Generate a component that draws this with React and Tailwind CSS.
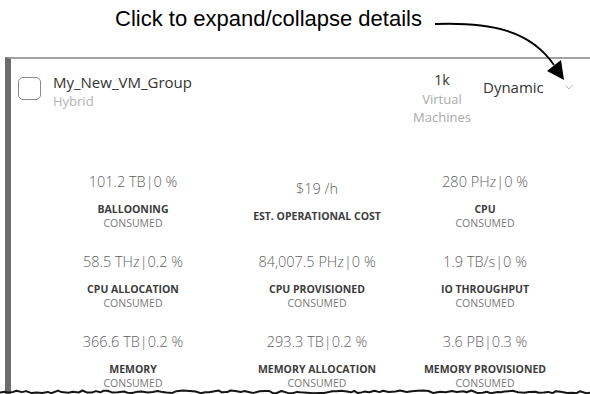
import React from 'react';

const metrics = [
  { value: '101.2 TB|0 %', label: 'BALLOONING', sub: 'CONSUMED' },
  { value: '$19 /h', label: 'EST. OPERATIONAL COST' },
  { value: '280 PHz|0 %', label: 'CPU', sub: 'CONSUMED' },
  { value: '58.5 THz|0.2 %', label: 'CPU ALLOCATION', sub: 'CONSUMED' },
  { value: '84,007.5 PHz|0 %', label: 'CPU PROVISIONED', sub: 'CONSUMED' },
  { value: '1.9 TB/s|0 %', label: 'IO THROUGHPUT', sub: 'CONSUMED' },
  { value: '366.6 TB|0.2 %', label: 'MEMORY', sub: 'CONSUMED' },
  { value: '293.3 TB|0.2 %', label: 'MEMORY ALLOCATION', sub: 'CONSUMED' },
  { value: '3.6 PB|0.3 %', label: 'MEMORY PROVISIONED', sub: 'CONSUMED' },
];

// irregular "torn paper" edge along the bottom, seeded so it is stable
const buildTornEdge = () => {
  let seed = 7;
  const rnd = () => {
    seed = (seed * 9301 + 49297) % 233280;
    return seed / 233280;
  };
  let d = 'M0 392.5';
  let x = 0;
  while (x < 590) {
    x += 3 + rnd() * 4;
    const y = 393.3 - rnd() * 2.8;
    d += ` L${x.toFixed(1)} ${y.toFixed(1)}`;
  }
  return d;
};
const tornEdge = buildTornEdge();

const Metric = ({ value, label, sub }) => (
  <div className="flex flex-col items-center justify-center text-center">
    <div className="text-[14.5px] leading-[20px] font-light text-[#616161] whitespace-nowrap">{value}</div>
    <div className="mt-[11px] text-[10.5px] leading-[13.5px] whitespace-nowrap">
      <div className="font-bold text-[#3d3d3d]">{label}</div>
      {sub && <div className="text-[#777]">{sub}</div>}
    </div>
  </div>
);

const App = () => {
  return (
    <div className="relative w-[590px] h-[394px] overflow-hidden bg-white font-['Open_Sans',sans-serif]">
      <div className="h-[57px] pl-[115px] pt-[8px]">
        <span className="font-['Liberation_Sans',Arial,sans-serif] text-[22px] leading-none text-black">
          Click to expand/collapse details
        </span>
      </div>

      <div className="ml-[5px] h-[337px] border-t-2 border-l-[6px] border-t-[#a2a2a2] border-l-[#6c6c6c] bg-white">
        {/* group header */}
        <div className="flex h-[113px] pt-[13px] pr-[17px]">
          <div className="ml-[7px] mt-[5px] w-[23px] h-[23px] rounded-[5px] border-[1.5px] border-[#8a8a8a]" />
          <div className="ml-[12px]">
            <div className="text-[15px] leading-[20px] text-[#333]">My_New_VM_Group</div>
            <div className="text-[13px] leading-[18px] text-[#b3b3b3]">Hybrid</div>
          </div>
          <div className="flex-1" />
          <div className="w-[60px] -mt-[1.5px] text-center">
            <div className="text-[14px] leading-[18px] text-[#333]">1k</div>
            <div className="mt-[1.5px] text-[13px] leading-[18px] text-[#aaa]">
              Virtual
              <br />
              Machines
            </div>
          </div>
          <div className="ml-[11px] w-[60px] mt-[5px] text-[15px] leading-[20px] text-[#333]">Dynamic</div>
          <svg className="ml-[22px] mt-[13px]" width="8" height="5" viewBox="0 0 8 5" fill="none">
            <path d="M0.5 0.5 L4 4 L7.5 0.5" stroke="#b5b5b5" strokeWidth="1" />
          </svg>
        </div>

        {/* metrics */}
        <div className="ml-[30px] grid grid-cols-[184px_184px_152px] gap-y-[22px]">
          {metrics.map((m) => (
            <Metric key={m.label} {...m} />
          ))}
        </div>
      </div>

      {/* annotation arrow */}
      <svg className="absolute left-0 top-0" width="590" height="90" viewBox="0 0 590 90" fill="none">
        <path d="M435 24 C490 22, 530 30, 554 65" stroke="#000" strokeWidth="1.8" />
        <polygon points="547,71 561,60 564,80" fill="#000" />
      </svg>

      {/* torn bottom edge */}
      <svg className="absolute left-0 top-0 pointer-events-none" width="590" height="394" viewBox="0 0 590 394" fill="none">
        <path d={tornEdge} stroke="#151515" strokeWidth="2" strokeLinejoin="round" />
      </svg>
    </div>
  );
};

export default App;
